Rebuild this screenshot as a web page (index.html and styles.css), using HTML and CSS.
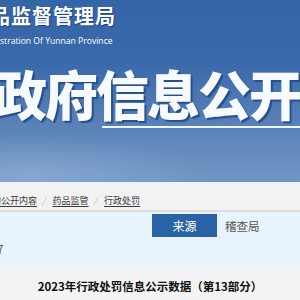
FILE: index.html
```html
<!DOCTYPE html>
<html lang="zh-CN">
<head>
    <meta charset="UTF-8">
    <meta name="viewport" content="width=device-width, initial-scale=1.0">
    <title>政府信息公开</title>
    <link rel="stylesheet" href="styles.css">
</head>
<body>
    <header class="banner">
        <div class="logo">
            <div class="logo-cn">药品监督管理局</div>
            <div class="logo-en">stration Of Yunnan Province</div>
        </div>
        <h1 class="big-title">政府信息公开</h1>
        <div class="title-line"></div>
    </header>

    <nav class="crumbs">
        <a class="first" href="#">的公开内容</a>
        <span class="sep">/</span>
        <a href="#">药品监管</a>
        <span class="sep">/</span>
        <a href="#">行政处罚</a>
    </nav>

    <section class="info">
        <div class="info-row">
            <span class="label">来源</span>
            <span class="value">稽查局</span>
        </div>
        <div class="info-row second">
            <span class="value date">7</span>
        </div>
    </section>

    <main class="article">
        <h2>2023年行政处罚信息公示数据（第13部分）</h2>
    </main>
</body>
</html>
```

FILE: styles.css
```css
body {
    margin: 0;
    padding: 0;
    width: 300px;
    overflow: hidden;
    font-family: "Noto Sans CJK SC", "Noto Sans", sans-serif;
    background-color: #f3f3f3;
    color: #333333;
}

.banner {
    height: 182px;
    overflow: hidden;
    background:
        radial-gradient(ellipse 180px 40px at 30px 175px, rgba(160, 190, 225, 0.45), rgba(160, 190, 225, 0) 100%),
        linear-gradient(to bottom, #3465a7 0%, #3b6aab 35%, #5b82b8 70%, #7196c4 100%);
}

.logo {
    padding-top: 3px;
    white-space: nowrap;
}

.logo-cn {
    margin-left: -31px;
    font-size: 20px;
    line-height: 25px;
    font-weight: bold;
    letter-spacing: 1px;
    color: #ffffff;
    text-shadow: 1px 1px 1px #1d4580;
}

.logo-en {
    margin-top: 7px;
    font-family: "Open Sans", sans-serif;
    font-size: 8.6px;
    line-height: 12px;
    color: #ffffff;
}

.big-title {
    margin: 14px 0 0 -6px;
    font-size: 53px;
    line-height: 64px;
    font-weight: 900;
    letter-spacing: -2px;
    white-space: nowrap;
    color: #f7fbff;
    text-shadow: 2px 2px 1px #244f8c;
}

.title-line {
    margin: 1px 0 0 102px;
    height: 2px;
    background-color: #eef4fb;
}

.crumbs {
    height: 30px;
    padding-top: 9px;
    box-sizing: border-box;
    display: flex;
    align-items: center;
    gap: 5px;
    background-color: #f2f2f2;
    border-bottom: 2px solid #dddddd;
    font-size: 9px;
    white-space: nowrap;
}

.crumbs a {
    color: #3a3a3a;
    text-decoration: underline;
    text-underline-offset: 2px;
}

.crumbs a.first {
    margin-left: -8px;
}

.crumbs .sep {
    color: #bbbbbb;
    font-style: italic;
    margin: 0 2px 0 0;
}

.info {
    background-color: #e8f4fd;
    padding: 2px 0 0;
    height: 52px;
}

.info-row {
    display: flex;
    align-items: center;
    height: 23px;
    padding-left: 152px;
}

.info-row.second {
    padding-left: 0;
    height: 23px;
}

.label {
    width: 65px;
    height: 23px;
    line-height: 23px;
    text-align: center;
    background-color: #2a62a6;
    color: #ffffff;
    font-size: 12px;
}

.value {
    margin-left: 8px;
    font-size: 11.5px;
    color: #555555;
}

.value.date {
    margin-left: -3px;
}

.article {
    padding-top: 10px;
}

.article h2 {
    margin: 0;
    text-align: center;
    font-size: 11.5px;
    line-height: 20px;
    font-weight: bold;
    color: #111111;
}
```
